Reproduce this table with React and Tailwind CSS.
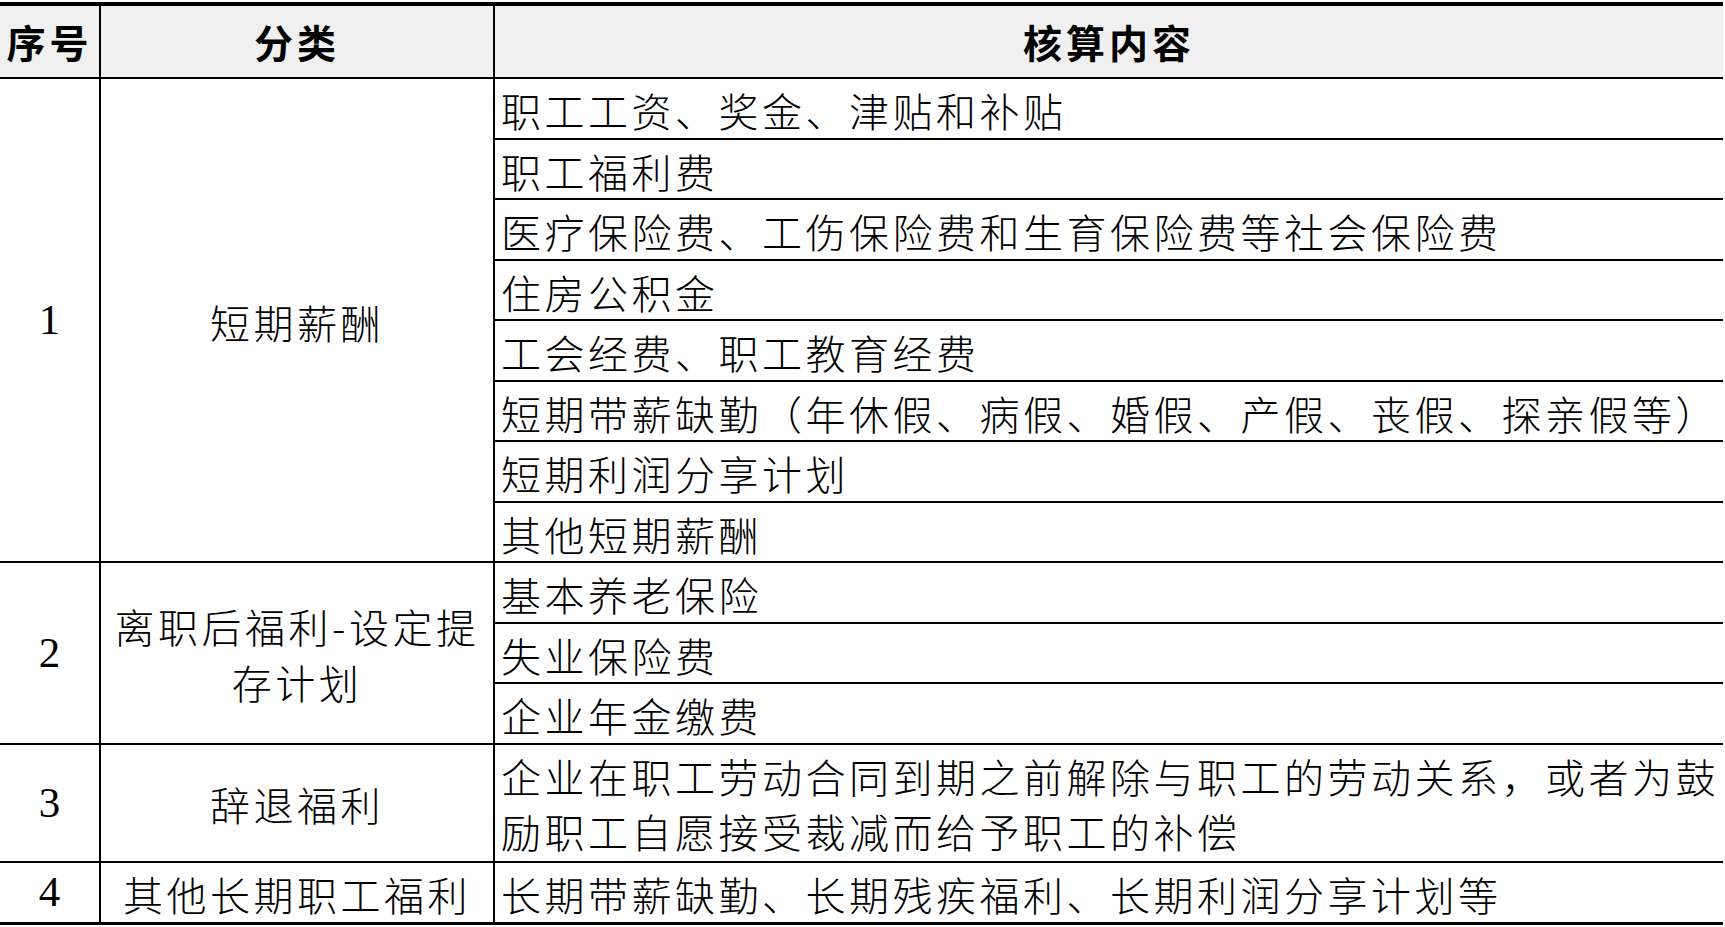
const rows1 = [
  '职工工资、奖金、津贴和补贴',
  '职工福利费',
  '医疗保险费、工伤保险费和生育保险费等社会保险费',
  '住房公积金',
  '工会经费、职工教育经费',
  '短期带薪缺勤（年休假、病假、婚假、产假、丧假、探亲假等）',
  '短期利润分享计划',
  '其他短期薪酬',
];

const rows2 = ['基本养老保险', '失业保险费', '企业年金缴费'];

const cjk = "font-['Noto_Sans_CJK_SC',sans-serif]";
const num = "font-['Liberation_Serif',serif] text-[43px] text-center leading-[50px]";
const cell = 'border-2 border-black';
const base = `${cell} ${cjk} font-light text-[40px] tracking-[3.5px]`;
const content = `${base} leading-[50px] pl-[6px] pt-[4px] pb-0 text-left whitespace-nowrap border-r-0`;
const cat = `${base} leading-[56px] text-center pt-[3px]`;

const App = () => {
  return (
    <div className="w-[1725px] h-[927px] bg-white pt-[2px] overflow-hidden text-black">
      <table className="w-[1723px] border-collapse table-fixed border-t-4 border-b-[3px] border-black">
        <colgroup>
          <col className="w-[100px]" />
          <col className="w-[394px]" />
          <col />
        </colgroup>
        <thead>
          <tr className="h-[74px] bg-[#f0f0f0]">
            <th className={`${cell} border-l-0 ${cjk} font-bold text-[39px] tracking-[4px] text-center`}>序号</th>
            <th className={`${cell} ${cjk} font-bold text-[39px] tracking-[4px] text-center`}>分类</th>
            <th className={`${cell} border-r-0 ${cjk} font-bold text-[39px] tracking-[4px] text-center`}>核算内容</th>
          </tr>
        </thead>
        <tbody>
          {rows1.map((text, i) => (
            <tr key={text} className="h-[60.5px]">
              {i === 0 && (
                <>
                  <td rowSpan={8} className={`${cell} border-l-0 ${num}`}>1</td>
                  <td rowSpan={8} className={cat}>短期薪酬</td>
                </>
              )}
              <td className={content}>{text}</td>
            </tr>
          ))}
          {rows2.map((text, i) => (
            <tr key={text} className="h-[60.5px]">
              {i === 0 && (
                <>
                  <td rowSpan={3} className={`${cell} border-l-0 ${num}`}>2</td>
                  <td rowSpan={3} className={cat}>
                    离职后福利-设定提
                    <br />
                    存计划
                  </td>
                </>
              )}
              <td className={content}>{text}</td>
            </tr>
          ))}
          <tr className="h-[118px]">
            <td className={`${cell} border-l-0 ${num}`}>3</td>
            <td className={cat}>辞退福利</td>
            <td className={`${base} leading-[55px] pl-[6px] pt-[2px] text-left whitespace-nowrap border-r-0`}>
              企业在职工劳动合同到期之前解除与职工的劳动关系，或者为鼓
              <br />
              励职工自愿接受裁减而给予职工的补偿
            </td>
          </tr>
          <tr className="h-[60px]">
            <td className={`${cell} border-l-0 border-b-[3px] ${num}`}>4</td>
            <td className={`${cat} border-b-[3px]`}>其他长期职工福利</td>
            <td className={`${content} border-b-[3px]`}>长期带薪缺勤、长期残疾福利、长期利润分享计划等</td>
          </tr>
        </tbody>
      </table>
    </div>
  );
};

export default App;
